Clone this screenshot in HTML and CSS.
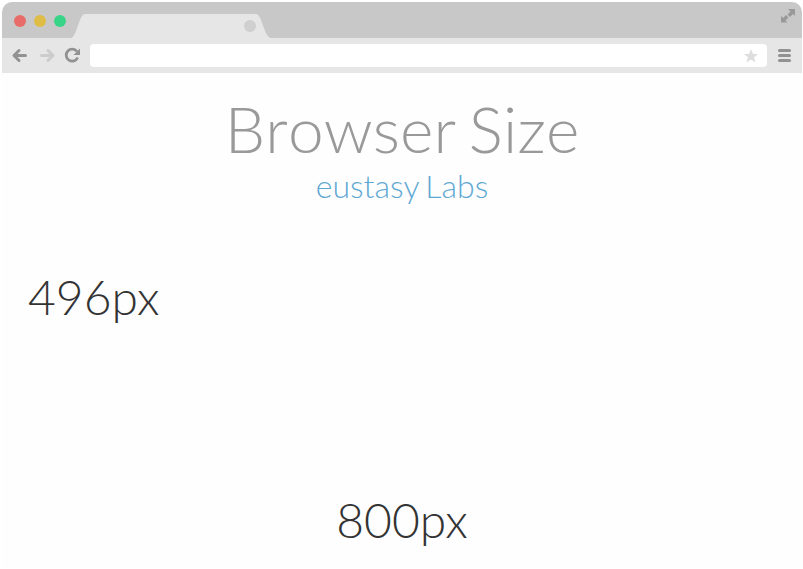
FILE: index.html
```html
<!DOCTYPE html>
<html lang="en"><head><meta charset="utf-8"><title>Browser Size</title><link rel="stylesheet" href="styles.css"></head>
<body>
<div class="window">
<header class="tabs">
<svg width="800" height="36" viewBox="0 0 800 36"><circle cx="18" cy="19" r="6" fill="#e86c68"/><circle cx="38" cy="19" r="6" fill="#dfbc45"/><circle cx="58" cy="19" r="6" fill="#38d488"/><path d="M69 36C75 35 77 12 83 12H254C260 12 262 35 269 36Z" fill="#e6e6e6"/><circle cx="248" cy="24" r="6" fill="#cfcfcf"/><path d="M786 7h7v7l-2-2-3 3-2.500-2.500 3-3zM779 14l2 2 3-3 2.500 2.500-3 3 2 2h-6.500z" fill="#999"/></svg>
</header>
<nav class="toolbar">
<svg width="88" height="35" viewBox="0 0 88 35"><g fill="none" stroke-width="3" stroke-linecap="round" stroke-linejoin="round"><path d="M23.500 17.500H12M17 12.500l-5 5 5 5" stroke="#929292"/><path d="M39.500 17.500H51M46 12.500l5 5-5 5" stroke="#ccc"/></g><path d="M75 13.500a6 6 0 1 0 .7 6" fill="none" stroke="#929292" stroke-width="2.800"/><path d="M78 10.500v6.500h-6.500z" fill="#929292"/></svg>
<div class="address"><svg width="14" height="14" viewBox="0 0 14 14"><path d="M7 0l1.900 5H14L10 8.300l1.600 5.200L7 10.500l-4.600 3L4 8.300 0 5h5.100z" fill="#ddd"/></svg></div>
<div class="menu"><i></i><i></i><i></i></div>
</nav>
<main><h1>Browser Size</h1><a class="labs">eustasy Labs</a><p class="height">496px</p><p class="width">800px</p></main>
</div>
</body></html>
```
FILE: styles.css
```css
*{box-sizing:border-box}
body{margin:0;background:#fff;font-family:Lato,sans-serif;font-weight:300}
.window{width:800px;height:566px;margin:2px 0 0 2px;border-radius:10px 10px 0 0;overflow:hidden;background:#fefefe}
.tabs{height:36px;background:#c8c8c8}
svg{display:block}
.toolbar{height:35px;background:#e6e6e6;display:flex;align-items:center}
.address{width:677px;height:23px;background:#fff;border-radius:4px;display:flex;align-items:center;justify-content:flex-end;padding-right:9px}
.menu{margin-left:11px;display:grid;gap:2px}
.menu i{display:block;width:13px;height:3px;border-radius:1.5px;background:#929292}
main{display:flex;flex-direction:column;align-items:center;padding-top:17px}
h1{margin:0;font-size:64px;line-height:77px;font-weight:300;font-kerning:none;letter-spacing:.1px;word-spacing:-5px;color:#999}
.labs{font-size:32px;line-height:38px;word-spacing:-2px;color:#5fa8d3}
p{margin:0;font-size:48px;line-height:58px;color:#333}
.height{align-self:flex-start;margin:63px 0 0 26px}
.width{margin-top:165px}
```
